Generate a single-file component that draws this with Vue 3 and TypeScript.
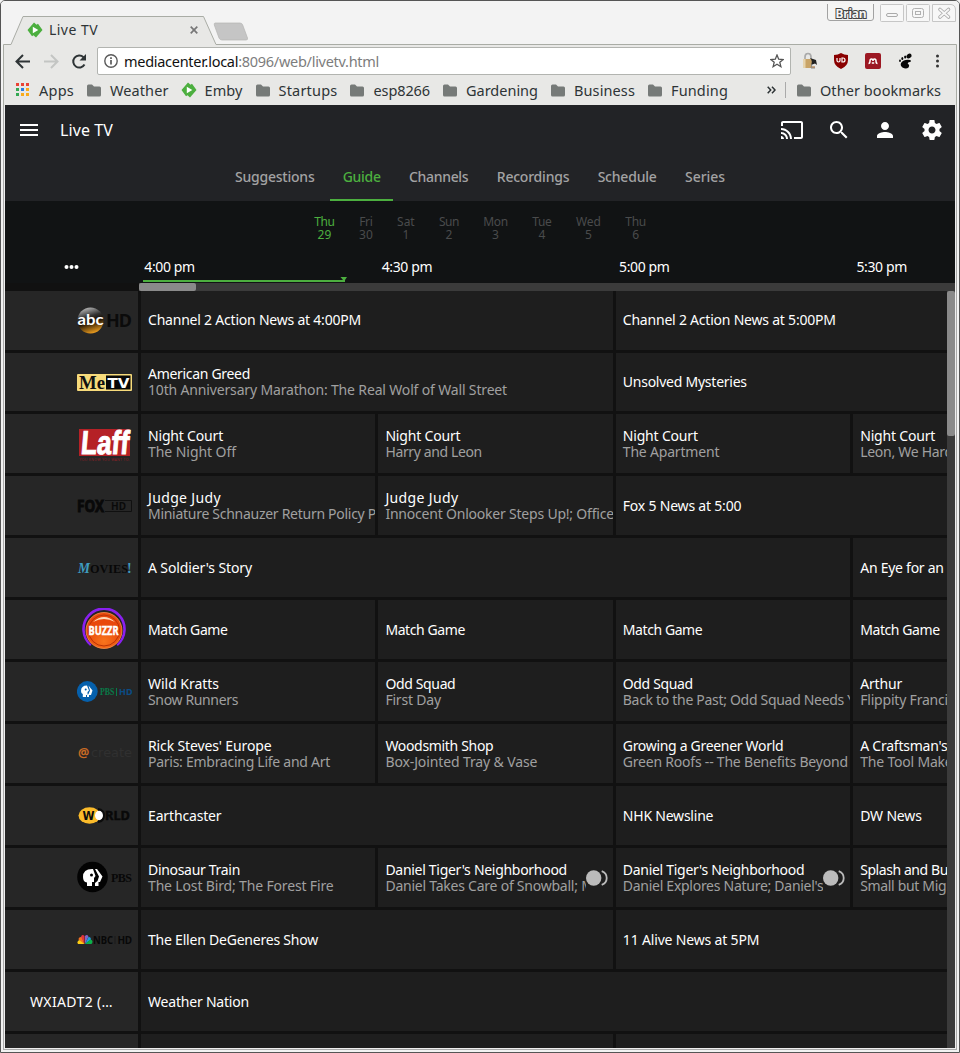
<script setup lang="ts">
interface Show { t: string; w?: number; s?: string; sw?: number; span: number; rec?: boolean }
interface Row { logo: string; shows: Show[] }

// Tracks text so that it occupies the given width
const fit = (el: HTMLElement, width?: number) => {
  if (!width) return
  const natural = el.getBoundingClientRect().width
  const n = (el.textContent ?? '').trim().length
  el.style.letterSpacing = `${((width - natural) / n).toFixed(3)}px`
}
const vFit = { mounted: (el: HTMLElement, b: { value?: number }) => fit(el, b.value) }

const bookmarks = [
  { icon: 'apps', t: 'Apps', w: 35 },
  { icon: 'folder', t: 'Weather', w: 58.5 },
  { icon: 'emby', t: 'Emby', w: 38 },
  { icon: 'folder', t: 'Startups', w: 59 },
  { icon: 'folder', t: 'esp8266', w: 56.5 },
  { icon: 'folder', t: 'Gardening', w: 72 },
  { icon: 'folder', t: 'Business', w: 61 },
  { icon: 'folder', t: 'Funding', w: 57 },
]
const tabs = [
  { t: 'Suggestions', w: 79.5 },
  { t: 'Guide', w: 38 },
  { t: 'Channels', w: 59.5 },
  { t: 'Recordings', w: 72.5 },
  { t: 'Schedule', w: 59 },
  { t: 'Series', w: 40 },
]
const days = [
  { d: 'Thu', n: 29, w: 20.5 }, { d: 'Fri', n: 30, w: 13.5 }, { d: 'Sat', n: 1, w: 17.5 }, { d: 'Sun', n: 2, w: 20 },
  { d: 'Mon', n: 3, w: 24.5 }, { d: 'Tue', n: 4, w: 19.5 }, { d: 'Wed', n: 5, w: 25 }, { d: 'Thu', n: 6, w: 20.5 },
]
const times = ['4:00 pm', '4:30 pm', '5:00 pm', '5:30 pm']
const dots = [0, 5, 10]
const appColors = ['#ea4335', '#ea4335', '#ea4335', '#34a853', '#2a7de1', '#f9ab1a', '#34a853', '#f9ab1a', '#f9ab1a']

const rows: Row[] = [
  { logo: 'abc', shows: [{ t: 'Channel 2 Action News at 4:00PM', w: 213, span: 2 }, { t: 'Channel 2 Action News at 5:00PM', w: 213, span: 2 }] },
  { logo: 'metv', shows: [{ t: 'American Greed', w: 102, s: '10th Anniversary Marathon: The Real Wolf of Wall Street', sw: 359, span: 2 }, { t: 'Unsolved Mysteries', w: 124, span: 2 }] },
  { logo: 'laff', shows: [
    { t: 'Night Court', w: 75, s: 'The Night Off', sw: 88, span: 1 }, { t: 'Night Court', w: 75, s: 'Harry and Leon', sw: 96.5, span: 1 },
    { t: 'Night Court', w: 75, s: 'The Apartment', sw: 96.5, span: 1 }, { t: 'Night Court', w: 75, s: 'Leon, We Hardly Knew Ye', sw: 159, span: 1 }] },
  { logo: 'fox', shows: [
    { t: 'Judge Judy', w: 73, s: 'Miniature Schnauzer Return Policy P', sw: 228, span: 1 }, { t: 'Judge Judy', w: 73, s: 'Innocent Onlooker Steps Up!; Office', sw: 228.5, span: 1 },
    { t: 'Fox 5 News at 5:00', w: 118.5, span: 2 }] },
  { logo: 'movies', shows: [{ t: "A Soldier's Story", w: 104, span: 3 }, { t: 'An Eye for an Eye', w: 109, span: 1 }] },
  { logo: 'buzzr', shows: [{ t: 'Match Game', w: 79.5, span: 1 }, { t: 'Match Game', w: 79.5, span: 1 }, { t: 'Match Game', w: 79.5, span: 1 }, { t: 'Match Game', w: 79.5, span: 1 }] },
  { logo: 'pbshd', shows: [
    { t: 'Wild Kratts', w: 71, s: 'Snow Runners', sw: 90, span: 1 }, { t: 'Odd Squad', w: 70, s: 'First Day', sw: 55.5, span: 1 },
    { t: 'Odd Squad', w: 70, s: 'Back to the Past; Odd Squad Needs You', sw: 248, span: 1 }, { t: 'Arthur', w: 42, s: 'Flippity Francine', sw: 104, span: 1 }] },
  { logo: 'create', shows: [
    { t: "Rick Steves' Europe", w: 123.5, s: 'Paris: Embracing Life and Art', sw: 182, span: 1 }, { t: 'Woodsmith Shop', w: 108, s: 'Box-Jointed Tray & Vase', sw: 152, span: 1 },
    { t: 'Growing a Greener World', w: 160.5, s: 'Green Roofs -- The Benefits Beyond', sw: 225, span: 1 }, { t: "A Craftsman's Legacy", w: 135, s: 'The Tool Maker', sw: 98, span: 1 }] },
  { logo: 'world', shows: [{ t: 'Earthcaster', w: 73.5, span: 2 }, { t: 'NHK Newsline', w: 90.5, span: 1 }, { t: 'DW News', w: 61.5, span: 1 }] },
  { logo: 'pbs', shows: [
    { t: 'Dinosaur Train', w: 92, s: 'The Lost Bird; The Forest Fire', sw: 185.5, span: 1 },
    { t: "Daniel Tiger's Neighborhood", w: 181.5, s: 'Daniel Takes Care of Snowball; Margaret', sw: 255, span: 1, rec: true },
    { t: "Daniel Tiger's Neighborhood", w: 181.5, s: "Daniel Explores Nature; Daniel's Nature", sw: 248, span: 1, rec: true },
    { t: 'Splash and Bubbles', w: 121, s: 'Small but Mighty', sw: 106, span: 1 }] },
  { logo: 'nbc', shows: [{ t: 'The Ellen DeGeneres Show', w: 170, span: 2 }, { t: '11 Alive News at 5PM', w: 136.5, span: 2 }] },
  { logo: 'none', shows: [{ t: 'Weather Nation', w: 101, span: 4 }] },
  { logo: 'blank', shows: [{ t: '', span: 2 }, { t: '', span: 2 }] },
]
</script>

<template>
  <div class="window">
    <svg class="frame" width="960" height="106" viewBox="0 0 960 106">
      <rect width="960" height="106" fill="#f3f3f3" />
      <path d="M3 106V43.500H11L23 15.500H203.500L216 43.500H957V106Z" fill="#e8e8e6" />
      <path d="M3.500 106V43.500H11L23 15.500H203.500L216 43.500H956.500V106" fill="none" stroke="#a9aca5" />
      <path d="M215 22H240Q242 22 242.700 24L247.500 37Q248 39 246 39H222Q220 39 219 37L214.300 24Q214 22 215 22Z" fill="#c5c5c5" stroke="#b5b5b3" stroke-width=".7" />
      <path d="M827.500 3V17Q827.500 19.500 830 19.500H871Q873.500 19.500 873.500 17V3" fill="#f5f5f4" stroke="#a2a2a2" />
      <g fill="#f7f7f7" stroke="#c6c6c6">
        <rect x="880.500" y="3.500" width="23" height="17" rx="1" />
        <rect x="906.500" y="3.500" width="23" height="17" rx="1" />
        <path d="M932.500 3.500H951Q955.500 4 955.500 9V20.500H932.500Z" />
        <rect x="886.500" y="12.500" width="11" height="3" rx="1.500" stroke="#aaa" />
        <rect x="912.500" y="7.500" width="11" height="9" rx="2" stroke="#b0b0b0" />
        <rect x="915.500" y="10.500" width="5" height="3" stroke="#b0b0b0" />
      </g>
      <path d="M940 8.500L948.500 16M948.500 8.500L940 16" stroke="#aaa" stroke-width="3.600" stroke-linecap="round" />
      <path d="M940 8.500L948.500 16M948.500 8.500L940 16" stroke="#f7f7f7" stroke-width="1.800" stroke-linecap="round" />
      <text x="835.500" y="17" class="user" textLength="31">Brian</text>
    </svg>

    <header class="chrome">
      <div class="tab">
        <svg width="16" height="16" viewBox="0 0 16 16"><path d="M7 .5L9.500 2.800L11 1.800L15.500 8L9 15.500L6.500 13.200L5 14.300L.5 8Z" fill="#4caf3f" /><path d="M5.800 4.700V11.300L11.300 8Z" fill="#fff" /></svg>
        <span v-fit="49">Live TV</span>
        <svg class="close" width="8" height="8" viewBox="0 0 8 8"><path d="M.7 .7L7.300 7.300M7.300 .7L.7 7.300" stroke="#777" stroke-width="1.700" /></svg>
      </div>
      <div class="toolbar">
        <svg width="84" height="20" viewBox="0 0 84 20" fill="none" stroke-width="2">
          <path d="M25 10.500H12M18 4L11.500 10.500L18 17" stroke="#2e3436" />
          <path d="M39 10.500H52M46 4L52.500 10.500L46 17" stroke="#c3c5c3" />
          <path d="M79.500 13.500A6 6 0 1 1 78.500 6.300" stroke="#2e3436" /><path d="M81 3V9.500H74.500Z" fill="#2e3436" />
        </svg>
        <div class="address">
          <svg width="14" height="14" viewBox="0 0 14 14"><circle cx="7" cy="7" r="6.200" fill="none" stroke="#5a5a5a" stroke-width="1.400" /><path d="M7 6V10.500M7 3.300V4.900" stroke="#5a5a5a" stroke-width="1.700" /></svg>
          <span v-fit="255" class="url">mediacenter.local<i>:8096/web/livetv.html</i></span>
          <svg class="star" width="14" height="14" viewBox="0 0 14 14"><path d="M7 1L8.700 5.200L13.200 5.500L9.800 8.300L10.900 12.700L7 10.300L3.100 12.700L4.200 8.300L.8 5.500L5.300 5.200Z" fill="none" stroke="#555" stroke-width="1.300" /></svg>
        </div>
        <svg class="extensions" width="145" height="18" viewBox="0 0 145 18">
          <path d="M5 8V5Q5 1.500 8 1.500T11 5V9" fill="none" stroke="#aaa" stroke-width="1.700" />
          <rect x="3" y="7" width="9" height="9" fill="#c9a467" /><path d="M3 7H5.500V16H3Z" fill="#e6d3ad" />
          <path d="M10 6Q13 9 11 13L15 11.500L17 13L16 8Z" fill="#222" /><path d="M12 12L11 16H15" fill="none" stroke="#888" /><path d="M12 15H15" stroke="#a86424" />
          <path d="M41 1Q38 3 34 3V8Q34 14 41 17Q48 14 48 8V3Q44 3 41 1Z" fill="#8a0000" />
          <path d="M37 6V8.500Q37 10 38.500 10T40 8.500V6M42 6H43Q45 6 45 8T43 10H42Z" fill="none" stroke="#fff" stroke-width="1.200" />
          <rect x="65" y="1" width="16" height="16" rx="2" fill="#9c1823" />
          <path d="M68.500 11.500Q70 11.500 70 9Q70 7 71.500 7T73 9Q73 7 74.500 7T76 9Q76 11.500 77.500 11.500M71.800 11H74.200" fill="none" stroke="#fff" stroke-width="1.500" />
          <g fill="#080808"><ellipse cx="109" cy="4" rx="2.800" ry="2.200" transform="rotate(-35 109 4)" /><ellipse cx="105.200" cy="5" rx="1.100" ry="1.600" /><ellipse cx="102.300" cy="6.500" rx="1" ry="1.500" /><ellipse cx="100" cy="8.700" rx=".9" ry="1.300" /><path d="M101 11Q104 7 110 8Q112 9 110 10Q107 10.500 108 12Q110 13 108.500 15.500Q106 17.500 102.500 15.500Q100 13.500 101 11Z" /></g>
          <g fill="#333"><circle cx="137.500" cy="4" r="1.500" /><circle cx="137.500" cy="9" r="1.500" /><circle cx="137.500" cy="14" r="1.500" /></g>
        </svg>
      </div>
      <nav class="bookmarks">
        <div v-for="b in bookmarks" :key="b.t" class="bookmark">
          <svg v-if="b.icon === 'folder'" width="14" height="13" viewBox="0 0 14 13"><path d="M0 2Q0 .5 1.500 .5H5L7 2.500H12.500Q14 2.500 14 4V11Q14 12.500 12.500 12.500H1.500Q0 12.500 0 11Z" fill="#767a78" /></svg>
          <svg v-else-if="b.icon === 'apps'" width="14" height="14" viewBox="0 0 14 14"><rect v-for="(c, i) in appColors" :key="i" :x="(i % 3) * 5" :y="Math.floor(i / 3) * 5" width="3" height="3" :fill="c" /></svg>
          <svg v-else class="emby" width="16" height="16" viewBox="0 0 16 16"><path d="M7 .5L9.500 2.800L11 1.800L15.500 8L9 15.500L6.500 13.200L5 14.300L.5 8Z" fill="#4caf3f" /><path d="M5.800 4.700V11.300L11.300 8Z" fill="#fff" /></svg>
          <span v-fit="b.w">{{ b.t }}</span>
        </div>
        <div class="overflow">
          <svg width="9" height="8" viewBox="0 0 9 8"><path d="M.7 .7L3.700 4L.7 7.300M5 .7L8 4L5 7.300" fill="none" stroke="#2e3436" stroke-width="1.500" /></svg>
          <div class="divider"></div>
          <svg width="14" height="13" viewBox="0 0 14 13"><path d="M0 2Q0 .5 1.500 .5H5L7 2.500H12.500Q14 2.500 14 4V11Q14 12.500 12.500 12.500H1.500Q0 12.500 0 11Z" fill="#767a78" /></svg>
          <span v-fit="121">Other bookmarks</span>
        </div>
      </nav>
    </header>

    <main class="page">
      <div class="appbar">
        <div class="title">
          <svg width="18" height="12" viewBox="0 0 18 12"><path d="M0 1H18M0 6H18M0 11H18" stroke="#fff" stroke-width="2" /></svg>
          <span v-fit="53">Live TV</span>
          <div class="actions">
            <svg viewBox="0 0 24 24"><path d="M21 3H3c-1.100 0-2 .9-2 2v3h2V5h18v14h-7v2h7c1.100 0 2-.9 2-2V5c0-1.100-.9-2-2-2zM1 18v3h3c0-1.660-1.340-3-3-3zm0-4v2c2.760 0 5 2.240 5 5h2c0-3.870-3.130-7-7-7zm0-4v2c4.970 0 9 4.030 9 9h2c0-6.080-4.930-11-11-11z" /></svg>
            <svg viewBox="0 0 24 24"><path d="M15.500 14h-.79l-.28-.27C15.410 12.590 16 11.110 16 9.500 16 5.910 13.090 3 9.500 3S3 5.910 3 9.500 5.910 16 9.500 16c1.610 0 3.090-.59 4.230-1.570l.27.28v.79l5 4.990L20.490 19l-4.990-5zm-6 0C7.010 14 5 11.990 5 9.500S7.010 5 9.500 5 14 7.010 14 9.500 11.990 14 9.500 14z" /></svg>
            <svg viewBox="0 0 24 24"><path d="M12 12c2.210 0 4-1.790 4-4s-1.790-4-4-4-4 1.790-4 4 1.790 4 4 4zm0 2c-2.670 0-8 1.340-8 4v2h16v-2c0-2.660-5.330-4-8-4z" /></svg>
            <svg viewBox="0 0 24 24"><path d="M19.430 12.980c.04-.32.07-.64.07-.98s-.03-.66-.07-.98l2.110-1.650c.19-.15.24-.42.12-.64l-2-3.460c-.12-.22-.39-.3-.61-.22l-2.490 1c-.52-.4-1.080-.73-1.690-.98l-.38-2.650C14.460 2.180 14.250 2 14 2h-4c-.25 0-.46.18-.49.42l-.38 2.650c-.61.25-1.170.59-1.690.98l-2.490-1c-.23-.09-.49 0-.61.22l-2 3.460c-.13.22-.07.49.12.64l2.110 1.650c-.04.32-.07.65-.07.98s.03.66.07.98l-2.110 1.650c-.19.15-.24.42-.12.64l2 3.460c.12.22.39.3.61.22l2.490-1c.52.4 1.080.73 1.690.98l.38 2.650c.03.24.24.42.49.42h4c.25 0 .46-.18.49-.42l.38-2.650c.61-.25 1.170-.59 1.690-.98l2.490 1c.23.09.49 0 .61-.22l2-3.460c.12-.22.07-.49-.12-.64l-2.110-1.650zM12 15.500c-1.930 0-3.500-1.570-3.500-3.500s1.570-3.500 3.500-3.500 3.500 1.570 3.500 3.500-1.570 3.500-3.500 3.500z" /></svg>
          </div>
        </div>
        <nav class="tabs">
          <div v-for="t in tabs" :key="t.t" :class="['navtab', { active: t.t === 'Guide' }]"><span v-fit="t.w">{{ t.t }}</span></div>
        </nav>
      </div>

      <div class="days">
        <div v-for="(d, i) in days" :key="i" :class="['day', { active: i === 0 }]"><span v-fit="d.w">{{ d.d }}</span><span>{{ d.n }}</span></div>
      </div>

      <div class="timeline">
        <div class="more"><svg width="16" height="4" viewBox="0 0 16 4"><circle v-for="x in dots" :key="x" :cx="x + 2.500" cy="2" r="2" fill="#fff" /></svg></div>
        <div class="slots">
          <div v-for="t in times" :key="t" class="slot"><span v-fit="50.5">{{ t }}</span></div>
          <svg class="now" width="206" height="6" viewBox="0 0 206 6"><path d="M0 3H200L197.500 0H204L202 3V5H0Z" fill="#4caf3f" /></svg>
        </div>
      </div>
      <div class="hscroll"><div class="hthumb"></div></div>

      <div class="guide">
        <div class="rows">
          <div v-for="(r, i) in rows" :key="i" class="row">
            <div class="channel">
              <span v-if="r.logo === 'none'" v-fit="83" class="callsign">WXIADT2 (…</span>
              <svg v-else width="56" height="44" viewBox="0 0 56 44">
                <g v-if="r.logo === 'abc'">
                  <defs>
                    <linearGradient id="abc" x1=".3" y1="0" x2=".6" y2="1"><stop offset="0" stop-color="#bbb" /><stop offset=".35" stop-color="#333" /><stop offset=".55" stop-color="#160c02" /><stop offset="1" stop-color="#f0a020" /></linearGradient>
                  </defs>
                  <circle cx="13.500" cy="22.500" r="13" fill="url(#abc)" />
                  <text x=".5" y="26.500" font-size="15.500" fill="#fff" class="b round" textLength="26" lengthAdjust="spacingAndGlyphs">abc</text>
                  <text x="29" y="29" font-size="18" fill="#0b0b0b" class="b" textLength="26">HD</text>
                </g>
                <g v-else-if="r.logo === 'metv'">
                  <rect x="0" y="14" width="55" height="17" rx="1" fill="#f7db7b" /><rect x="29" y="15.500" width="24.500" height="14" fill="#080808" />
                  <text x="2" y="28.500" font-size="18" fill="#111" class="b serif" textLength="26" lengthAdjust="spacingAndGlyphs">Me</text>
                  <text x="30.500" y="27.500" font-size="14" fill="#fff" class="b dj" textLength="22" lengthAdjust="spacingAndGlyphs">TV</text>
                </g>
                <g v-else-if="r.logo === 'laff'">
                  <rect x="2" y="7" width="51" height="27" fill="#b52126" />
                  <text x="6" y="32.500" font-size="33" fill="#fff" stroke="#fff" class="b cond" textLength="48" lengthAdjust="spacingAndGlyphs" transform="skewX(-5)">Laff</text>
                  <text x="2.500" y="38.500" font-size="3.500" fill="#8a2226" textLength="50">YOU KNOW YOU WANT TO.</text>
                </g>
                <g v-else-if="r.logo === 'fox'">
                  <text x="0" y="28" font-size="16" fill="#090909" stroke="#090909" stroke-width=".9" class="b" textLength="27" lengthAdjust="spacingAndGlyphs">FOX</text>
                  <path d="M28 16.500H54.500V27.500H28" fill="none" stroke="#101010" />
                  <text x="34" y="26" font-size="10" fill="#0a0a0a" class="b" textLength="15">HD</text>
                </g>
                <g v-else-if="r.logo === 'movies'" class="b serif">
                  <text x="1" y="26.500" font-size="14" fill="#3e9cc0" font-style="italic" textLength="12" lengthAdjust="spacingAndGlyphs">M</text>
                  <text x="13" y="26.500" font-size="13.500" fill="#080808" textLength="38" lengthAdjust="spacingAndGlyphs">OVIES</text>
                  <text x="50" y="26.500" font-size="14" fill="#3e9cc0">!</text>
                </g>
                <g v-else-if="r.logo === 'buzzr'">
                  <defs><radialGradient id="buzz" cy=".8"><stop offset="0" stop-color="#f8751c" /><stop offset="1" stop-color="#e9480c" /></radialGradient></defs>
                  <path d="M14 37A20.500 20.500 0 1 1 40 37" fill="none" stroke="#8a20f0" stroke-width="2.600" />
                  <circle cx="27" cy="22.500" r="18.700" fill="#3a1510" /><circle cx="27" cy="22.500" r="18" fill="url(#buzz)" stroke="#ffa45a" stroke-width=".7" /><circle cx="27" cy="22.500" r="15.500" fill="none" stroke="#b93405" stroke-width="1" />
                  <path d="M16 14Q27 4 38 14Q27 8 16 14Z" fill="#ffd9b8" />
                  <text x="11.500" y="27" font-size="12.500" fill="#fff" stroke="#fff" stroke-width=".4" class="b" textLength="30" lengthAdjust="spacingAndGlyphs">BUZZR</text>
                </g>
                <g v-else-if="r.logo === 'pbshd'">
                  <circle cx="10.300" cy="21.500" r="10.400" fill="#0660ac" />
                  <path d="M4 21Q4 15.500 10 15.500L12 20.500L10.500 22V25H9V27H5.800V24Q4 23.500 4 21ZM11.500 15.500L15.500 20.500L14 25H12V27H10V25L11.500 24L13 20.500Z" fill="#fff" /><circle cx="8.700" cy="19.500" r="1" fill="#0660ac" />
                  <text x="23" y="25" font-size="9.500" fill="#087b49" class="b serif" textLength="14.500" lengthAdjust="spacingAndGlyphs">PBS</text><path d="M39.500 18V26" stroke="#087b49" />
                  <text x="42" y="25" font-size="9" fill="#0b4c85" class="b" textLength="13.500" lengthAdjust="spacingAndGlyphs">HD</text>
                </g>
                <g v-else-if="r.logo === 'create'">
                  <text x="1" y="25" font-size="12.500" fill="#c96a24" class="b">@</text>
                  <text x="14" y="25" font-size="12" fill="#303030" class="dj" textLength="41" lengthAdjust="spacingAndGlyphs">create</text>
                </g>
                <g v-else-if="r.logo === 'world'">
                  <ellipse cx="12.500" cy="21.500" rx="11" ry="8.300" fill="#fbbb2a" />
                  <text x="5.500" y="26" font-size="12" fill="#0c0c0c" class="b dj" textLength="12" lengthAdjust="spacingAndGlyphs">W</text>
                  <path d="M21 14Q28 15 28 21.500T21 29Z" fill="#0c0c0c" />
                  <ellipse cx="22" cy="21.500" rx="4" ry="4.700" fill="#fff" />
                  <text x="28" y="25.500" font-size="12" fill="#090909" stroke="#090909" stroke-width=".4" class="b" textLength="25" lengthAdjust="spacingAndGlyphs">RLD</text>
                </g>
                <g v-else-if="r.logo === 'pbs'">
                  <circle cx="15.500" cy="21" r="15.300" fill="#030303" />
                  <path d="M6 21Q6 13 15 13H16L18.500 20L17 22V26H15V30H10V26.500Q6 26 6 21ZM18 13H20L25.500 20.500L23 26H21.500V30H18V27L20.500 25L22 20.500Z" fill="#fff" /><circle cx="14.500" cy="19" r="1.500" fill="#030303" />
                  <text x="34" y="25.500" font-size="12" fill="#080808" class="serif b" textLength="21">PBS</text>
                </g>
                <g v-else-if="r.logo === 'nbc'">
                  <path d="M7.500 26L1 26Q-1 23 3.500 21.500Z" fill="#fccc12" /><path d="M7.500 26L1.500 21.500Q1.500 18.500 5 19Z" fill="#f37021" /><path d="M7.500 26L4 18.500Q5.500 16 7.500 18Z" fill="#e0343f" />
                  <path d="M8 26L8 18Q10 16 11.500 18.500Z" fill="#8064c8" /><path d="M8 26L11.500 19Q14 18.500 14 21.500Z" fill="#1ba0de" /><path d="M8 26L13.500 21.500Q17 23 14.500 26Z" fill="#0cb14b" />
                  <text x="16" y="25.500" font-size="10" fill="#080808" class="b" textLength="20" lengthAdjust="spacingAndGlyphs">NBC</text><path d="M38 18V26" stroke="#1b1b1b" />
                  <text x="40.500" y="25.500" font-size="10" fill="#080808" class="b" textLength="14.500">HD</text>
                </g>
              </svg>
            </div>
            <div v-for="(s, j) in r.shows" :key="j" :class="['show', 'span' + s.span]">
              <div class="text">
                <div class="name"><span v-fit="s.w">{{ s.t }}</span></div>
                <div v-if="s.s" class="episode"><span v-fit="s.sw">{{ s.s }}</span></div>
              </div>
              <svg v-if="s.rec" class="rec" width="22" height="16" viewBox="0 0 22 16"><circle cx="7.700" cy="8" r="7.700" fill="#bbb" /><path d="M15.700 1.200Q20.700 3 20.700 8T15.700 14.800" fill="none" stroke="#bbb" stroke-width="1.800" /></svg>
            </div>
          </div>
        </div>
        <div class="vscroll"><div class="vthumb"></div></div>
      </div>
    </main>
  </div>
</template>

<style>
body { background: #f3f3f3; overflow: hidden; }
</style>

<style scoped>
.window { position: relative; box-sizing: border-box; width: 960px; height: 1053px; padding: 1px 4px 4px 4px; overflow: hidden; border: 1px solid #555; border-radius: 5px 5px 0 0; background: #eee; font-family: "Noto Sans", "Open Sans", sans-serif; font-size: 14px; color: #2e3436; box-shadow: inset 0 0 0 2px #f2f2f2, inset 0 0 0 3px #aaa; }
.window span { white-space: nowrap; display: inline-block; }
svg { flex: none; display: block; }
.frame { position: absolute; left: -1px; top: 0; }
.user { font: bold 12px "Noto Sans", sans-serif; fill: #f5f5f5; stroke: #444; stroke-width: 2px; paint-order: stroke; }
.chrome { position: relative; height: 102px; }
.tab { display: flex; align-items: center; gap: 6px; height: 42px; padding: 13px 0 0 22px; box-sizing: border-box; }
.close { margin-left: 86px; }
.toolbar { display: flex; align-items: center; height: 36px; margin-top: -1px; }
.address { display: flex; align-items: center; width: 694px; height: 28px; box-sizing: border-box; border: 1px solid #b2b4b0; border-radius: 2px; background: #fff; padding: 0 6px 0 6px; margin-left: 8px; gap: 6px; color: #111; font-size: 14.5px; }
.address i { font-style: normal; color: #7d7d7d; }
.star { margin-left: auto; }
.extensions { margin-left: 9px; }
.bookmarks { display: flex; align-items: center; height: 24px; margin-top: -1px; padding: 0 14px 0 11px; gap: 13px; font-size: 14.5px; line-height: 20px; }
.bookmark, .overflow { display: flex; align-items: center; gap: 9px; }
.bookmark span, .overflow span { margin-top: -1px; }
.emby { margin: 0 -1px; }
.overflow { margin-left: auto; }
.divider { width: 1px; height: 16px; background: #aaa; margin-right: 2px; }
.page { position: relative; width: 950px; height: 943px; margin-top: 1px; background: #111; overflow: hidden; color: #fff; }
.appbar { height: 96px; background: #222326; }
.title { display: flex; align-items: center; height: 49px; padding: 0 11px 0 15px; font-size: 16px; }
.title > span { margin-left: 22px; }
.actions { margin-left: auto; display: flex; gap: 22.700px; }
.actions svg { width: 24px; height: 24px; fill: #fff; }
.tabs { display: flex; height: 47px; justify-content: center; color: #a2a2a3; font-weight: 500; }
.navtab { padding: 0 14.200px; border-bottom: 2px solid transparent; line-height: 45px; }
.navtab.active { padding: 0 12.500px; margin: 0 1.500px; border-color: #4caf3f; color: #4caf3f; }
.days { display: flex; justify-content: center; gap: 24.350px; padding-top: 14px; height: 50px; box-sizing: border-box; background: #111314; }
.day { display: flex; flex-direction: column; align-items: center; color: #4a4b4c; font-size: 12px; line-height: 13px; }
.day.active { color: #4caf3f; }
.timeline { display: flex; height: 32px; background: #111314; }
.more { display: flex; align-items: center; width: 134px; height: 32px; justify-content: center; }
.slots { display: flex; position: relative; width: 816px; overflow: hidden; }
.slot { flex: none; width: 237.400px; padding-left: 5.300px; box-sizing: border-box; line-height: 31px; }
.now { position: absolute; left: 4px; bottom: 0; }
.hscroll { height: 8px; margin-left: 134px; background: #3b3b3b; }
.hthumb { width: 57px; height: 8px; border-radius: 2px; background: #8a8a8a; }
.guide { display: flex; height: 757px; }
.rows { width: 942px; overflow: hidden; margin-top: -.4px; }
.row { display: flex; gap: 3px; width: 1100px; height: 58.930px; margin-bottom: 3px; }
.channel { flex: none; width: 133px; display: flex; align-items: center; justify-content: flex-end; box-sizing: border-box; padding: .8px 5px 0 0; background: #262626; }
.callsign { margin-right: 20px; }
.show { flex: none; display: flex; align-items: center; box-sizing: border-box; padding: .8px 0 0 5px; background: #1e1e1e; overflow: hidden; }
.span1 { width: 234.400px; }
.span2 { width: 471.800px; }
.span3 { width: 709.200px; }
.span4 { width: 947px; }
.text { flex: 1; min-width: 0; overflow: hidden; padding: 4px 0 4px 2px; line-height: 16px; }
.name { height: 16px; }
.episode { height: 16px; color: #a0a0a0; }
.text span { line-height: 16px; vertical-align: top; }
.rec { margin: 0 5px 0 0; }
.vscroll { width: 8px; background: #3b3b3b; }
.vthumb { height: 145px; border-radius: 2px; background: #8a8a8a; }
.b { font-weight: bold; }
.serif { font-family: "Liberation Serif", serif; }
.dj { font-family: "DejaVu Sans", sans-serif; }
.cond { font-family: "Liberation Sans", sans-serif; }
.round { font-family: Lato, sans-serif; }
</style>
